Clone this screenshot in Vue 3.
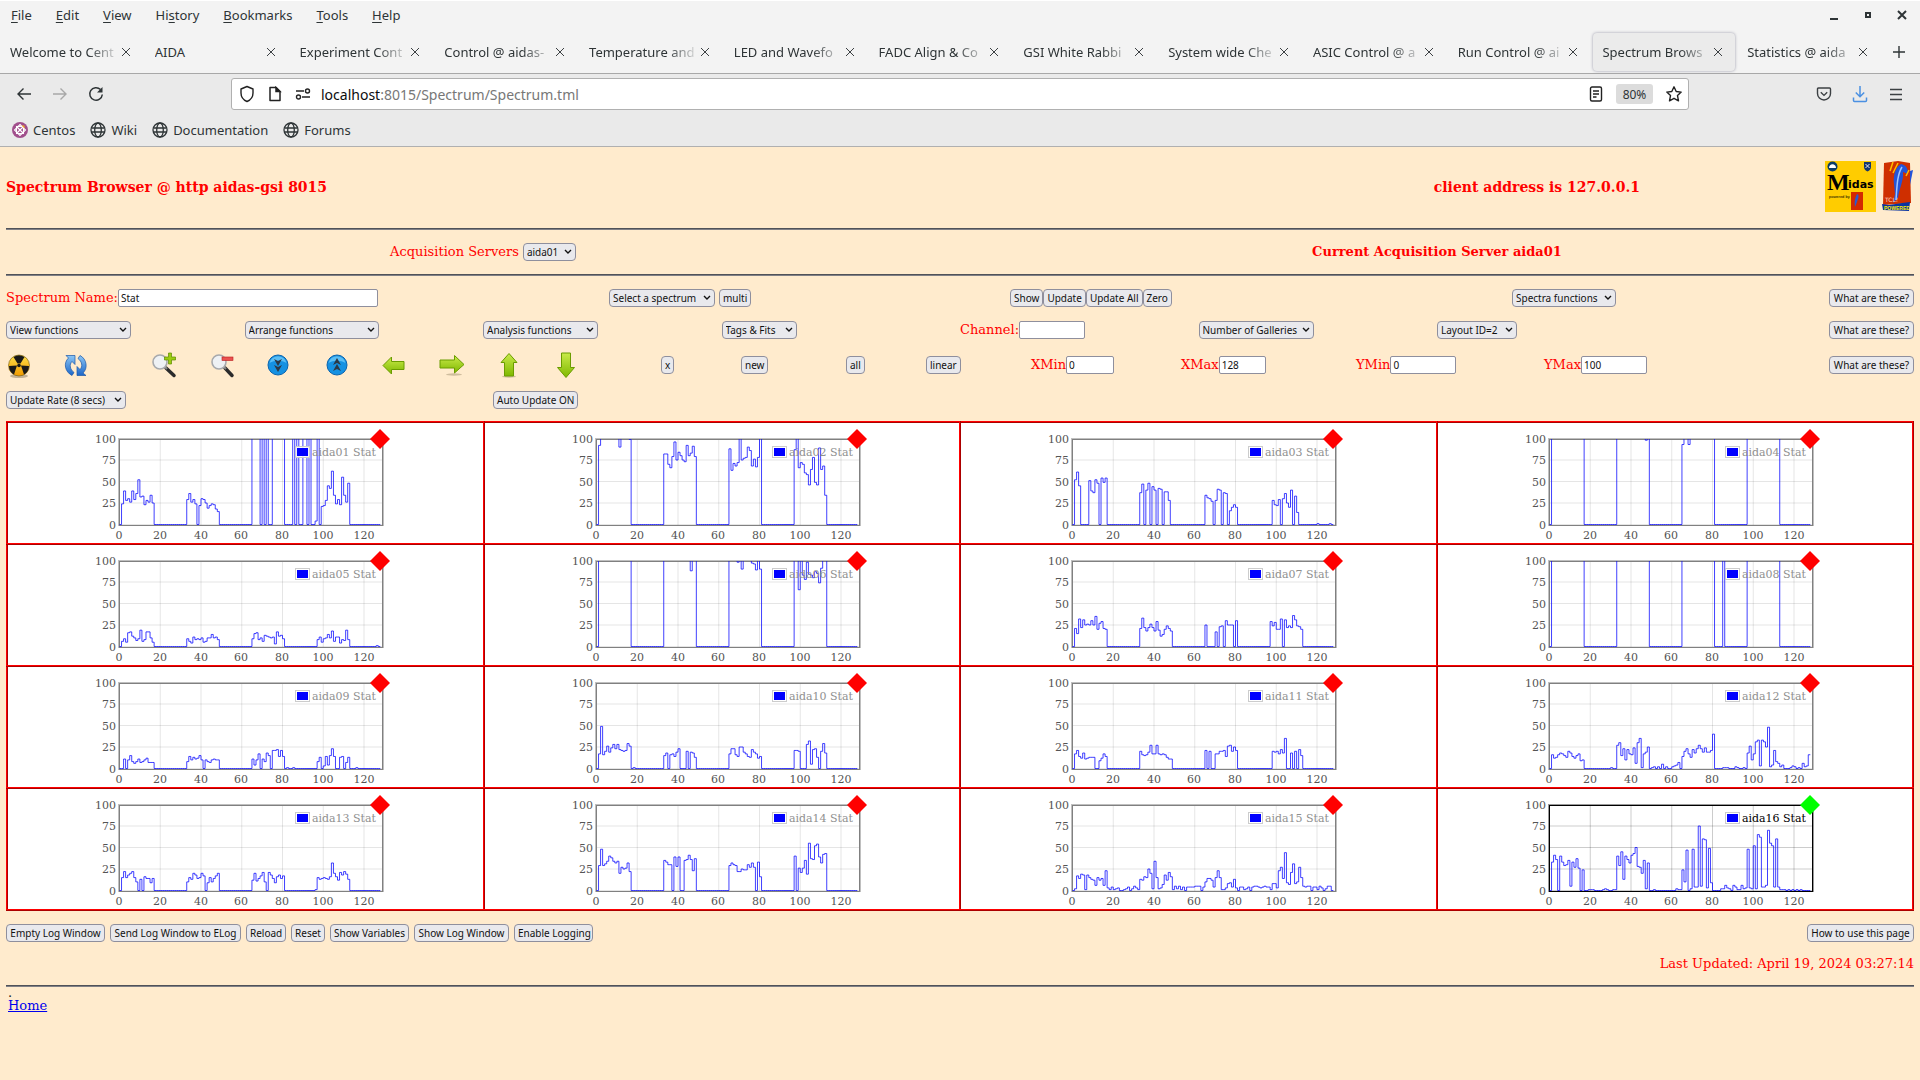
<script setup>
const menus = [
  ['', 'F', 'ile'], ['', 'E', 'dit'], ['', 'V', 'iew'], ['Hi', 's', 'tory'],
  ['', 'B', 'ookmarks'], ['', 'T', 'ools'], ['', 'H', 'elp'],
]
const tabs = [
  'Welcome to Cent', 'AIDA', 'Experiment Cont', 'Control @ aidas-', 'Temperature and',
  'LED and Wavefo', 'FADC Align & Co', 'GSI White Rabbi', 'System wide Che',
  'ASIC Control @ a', 'Run Control @ ai', 'Spectrum Brows', 'Statistics @ aida',
]
const activeTab = 11
const bookmarks = ['Centos', 'Wiki', 'Documentation', 'Forums']

const functionMenus = [
  { label: 'View functions', width: 125 },
  { label: 'Arrange functions', width: 134 },
  { label: 'Analysis functions', width: 115 },
  { label: 'Tags & Fits', width: 75 },
]
const galleryMenus = [
  { label: 'Number of Galleries', width: 115 },
  { label: 'Layout ID=2', width: 80 },
]
const limits = [
  { label: 'XMin', value: '0', width: 48 },
  { label: 'XMax', value: '128', width: 47 },
  { label: 'YMin', value: '0', width: 66 },
  { label: 'YMax', value: '100', width: 66 },
]
const logButtons = [
  { label: 'Empty Log Window', width: 99 },
  { label: 'Send Log Window to ELog', width: 131 },
  { label: 'Reload', width: 40 },
  { label: 'Reset', width: 34 },
  { label: 'Show Variables', width: 79 },
  { label: 'Show Log Window', width: 95 },
  { label: 'Enable Logging', width: 79 },
]

// Anything above the visible range is clipped by the plot area.
const H = 140
const full = Array(16).fill(H)
// Each spectrum maps a first channel to the run of counts that starts there.
const spectra = [
  { 1: [24, 39, 28, 30, 26, 39, 29, 36, 52, 32, 33, 23, 28, 26, 34, 25],
    33: [29, 36, 26, 29, 24, 0, 22, 30, 29, 25, 19, 22, 24, 23, 18, 15],
    65: [H, H, H, H, 0, H, 0, H, 0, 0, H, H, H, H, H, H],
    85: [H, 0, H, 0, 0, H, H, 0, H, 0, 0, 4, H, 0, 21, 22, 28, 45, 42, 62, 34, 24, 29, 23, 55, 34, 26, 48] },
  { 1: [92, H, H, H, H, H, H, H, H, H, 90, H, H, H, H, 99],
    33: [82, 82, 70, 66, 79, 96, 75, 84, 80, 75, 73, 92, 80, 83, 91, 79],
    65: [88, 63, 71, 68, 72, H, 75, 77, 78, 90, 86, 68, 76, 67, 78, H],
    97: [87, H, 66, 72, 70, 60, 58, 46, 64, 78, 49, 46, 89, 64, 68, 34] },
  { 1: [52, 61, 45, 0, 0, 0, 0, 51, 39, 37, 52, 48, 0, 54, 49, 54],
    33: [37, 47, 0, 40, 48, 0, 44, 40, 0, 42, 41, 0, 38, 38, 28],
    65: [34, 31, 30, 27, 0, 28, 41, 40, 0, 37, 36, 0, 16, 20, 23, 20],
    98: [28, 23, 22, 29, 0, 30, 36, 25, 20, 40, 0, 33, 14], 120: [1], 126: [1] },
  { 1: full, 33: [H, H, H, H, H, H, H, H, H, H, H, H, H, H, 98, H],
    65: [93, H, H, 93, H, H, H, H, H, H, H, H, H, H, H, H], 97: full },
  { 1: [6, 9, 5, 16, 17, 12, 10, 7, 9, 19, 6, 8, 17, 17, 10, 5],
    33: [9, 6, 4, 11, 8, 9, 8, 10, 5, 6, 10, 10, 14, 10, 11, 8],
    65: [9, 15, 16, 8, 10, 6, 13, 12, 11, 10, 11, 3, 17, 12, 13, 9],
    97: [8, 11, 5, 9, 10, 14, 10, 18, 6, 11, 11, 4, 8, 7, 19, 8], 126: [1] },
  { 1: full, 33: [H, H, H, H, H, H, H, H, H, H, H, H, H, 88, H, H],
    65: [H, H, H, H, 98, H, 90, H, H, H, H, 97, 96, 89, H, 90],
    97: [H, H, 66, H, 83, 78, 98, 84, 83, 80, 87, 85, 74, 91, H, H] },
  { 1: [21, 15, 32, 22, 31, 25, 26, 25, 30, 25, 35, 20, 27, 29, 21, 20],
    33: [21, 33, 22, 18, 22, 26, 22, 18, 29, 19, 12, 14, 20, 24, 21, 18],
    65: [25, 0, 0, 0, 0, 17, 0, 23, 24, 0, 30, 25, 25, 25, 0, 30],
    97: [29, 24, 28, 20, 20, 32, 0, 31, 22, 24, 22, 36, 31, 24, 23, 20] },
  { 1: full, 33: full, 65: full, 85: [H], 97: full },
  { 2: [11, 0, 10, 15, 8, 6, 8, 11, 7, 8, 10, 12, 7, 7, 7],
    33: [8, 14, 10, 13, 11, 12, 15, 10, 0, 10, 8, 7, 10, 11, 10, 10],
    65: [11, 4, 10, 17, 0, 11, 8, 18, 15, 0, 21, 21, 22, 14, 21, 14], 82: [1], 85: [1],
    97: [8, 13, 0, 3, 14, 4, 15, 23, 14, 0, 0, 13, 14, 0, 7, 13], 116: [1] },
  { 1: [17, 49, 16, 20, 26, 19, 24, 28, 23, 28, 22, 21, 20, 21, 29, 26], 18: [1],
    33: [15, 18, 0, 16, 17, 14, 19, 23, 0, 0, 0, 20, 0, 19, 18, 13],
    65: [17, 23, 23, 16, 14, 25, 25, 19, 17, 14, 13, 22, 19, 17, 12, 14],
    97: [21, 21, 20, 0, 0, 0, 28, 32, 5, 22, 23, 13, 0, 20, 29, 18] },
  { 1: [17, 21, 14, 12, 18, 11, 12, 13, 13, 13, 0, 0, 9, 12, 17, 14],
    33: [20, 16, 15, 16, 19, 27, 17, 17, 27, 17, 16, 17, 16, 13, 11, 11],
    65: [21, 0, 20, 0, 0, 17, 17, 20, 20, 21, 14, 26, 27, 20, 25, 21],
    98: [20, 19, 20, 17, 22, 18, 35, 0, 0, 18, 0, 20, 0, 22, 15] },
  { 1: [16, 12, 13, 16, 18, 17, 15, 13, 20, 18, 14, 12, 15, 17, 9, 10], 30: [1],
    33: [27, 30, 15, 23, 10, 22, 17, 16, 24, 6, 30, 35, 1, 17, 19, 25],
    50: [1, 2, 0, 2, 0, 5, 0, 2, 0, 0, 2, 3, 4, 7, 0, 14, 20, 23, 17, 13, 22, 18, 23, 27, 23, 19, 24, 19, 19, 21, 40],
    85: [1, 1, 1, 0, 0, 0, 2, 1, 0, 0, 1, 0, 18, 26, 10, 17, 31, 33, 3, 33, 31, 25, 48, 2, 4, 21, 8, 6, 2, 4, 0, 0, 0, 1, 3, 2, 0, 1, 0, 6, 2, 3, 16] },
  { 1: [15, 22, 15, 18, 20, 22, 15, 10, 0, 13, 0, 16, 14, 14, 9, 14],
    33: [10, 15, 13, 20, 18, 14, 15, 20, 17, 0, 9, 15, 10, 14, 17, 20],
    65: [12, 20, 11, 14, 17, 21, 10, 0, 21, 18, 14, 9, 16, 18, 14, 17],
    96: [1, 15, 13, 14, 15, 14, 13, 16, 32, 20, 16, 12, 21, 18, 22, 19, 13] },
  { 1: [29, 48, 29, 31, 34, 40, 38, 34, 32, 34, 20, 27, 25, 26, 32, 22],
    33: [35, 33, 30, 30, 0, 39, 28, 39, 0, 0, 35, 36, 41, 36, 23, 37],
    65: [29, 32, 30, 29, 22, 22, 25, 24, 24, 30, 27, 32, 27, 0, 33, 16],
    97: [40, 0, 26, 21, 26, 35, 19, 55, 37, 36, 52, 54, 39, 32, 42, 43] },
  { 1: [2, 17, 14, 19, 18, 1, 18, 15, 13, 12, 6, 15, 12, 14, 6, 23, 3, 1, 4, 1, 2, 3, 0, 0, 1, 2, 4, 0, 2, 5, 3, 1,
      13, 12, 16, 15, 25, 20, 2, 34, 15, 2, 3, 7, 18, 12, 21, 16, 1, 5, 2, 5, 1, 4, 0, 4, 4, 4, 4, 5, 5, 5, 0, 4,
      10, 14, 14, 12, 4, 15, 23, 15, 1, 1, 3, 8, 9, 4, 13, 3, 0, 4, 4, 1, 2, 4, 0, 4, 5, 5, 4, 3, 4, 5, 4, 4,
      1, 8, 8, 3, 23, 27, 14, 44, 9, 7, 21, 31, 8, 10, 27, 15, 5, 4, 5, 5, 0, 4, 4, 1, 5, 3, 0, 2, 5, 5, 0] },
  { 1: [33, 41, 36, 0, 40, 33, 29, 30, 35, 5, 33, 27, 37, 26, 0, 24, 0, 0, 1, 1, 1, 0, 0, 0, 0, 1, 2, 1, 0, 0, 1, 1,
      40, 29, 45, 13, 40, 36, 32, 41, 43, 50, 28, 27, 20, 35, 2, 32, 0, 0, 1],
    62: [2, 1, 1, 24, 10, 47, 0, 2, 48, 4, 4, 75, 5, 60, 59, 3, 49, 9, 0, 0, 0, 0, 2, 2, 6, 3, 2, 0, 6, 4, 1, 1, 6, 2, 3,
      48, 3, 2, 52, 2, 65, 62, 4, 4, 6, 70, 55, 52, 4, 60, 4, 1, 1, 1, 0, 1, 0, 1, 0, 1, 0, 1] },
]

const px = (channel) => 29.5 + channel * 2.0375
const py = (count) => 101.5 - Math.min(count, 110) * 0.86

function tracePath(runs) {
  const counts = Array(128).fill(0)
  for (const [start, values] of Object.entries(runs)) {
    values.forEach((v, i) => { counts[Number(start) + i] = v })
  }
  let d = `M${px(0)} ${py(counts[0])}`
  counts.slice(0, 128).forEach((v, i) => {
    d += `V${py(v).toFixed(2)}H${px(i + 1).toFixed(2)}`
  })
  return d
}

const charts = spectra.map((runs, i) => ({
  name: `aida${String(i + 1).padStart(2, '0')} Stat`,
  path: tracePath(runs),
  selected: i === 15,
}))
const chartRows = [0, 4, 8, 12].map((n) => charts.slice(n, n + 4))
const xTicks = [0, 20, 40, 60, 80, 100, 120]
const yTicks = [0, 25, 50, 75, 100]
</script>

<template>
  <div class="window">
    <header class="chrome">
      <div class="menubar">
        <nav class="menus">
          <a v-for="m in menus" :key="m.join('')" href="#">{{ m[0] }}<u>{{ m[1] }}</u>{{ m[2] }}</a>
        </nav>
        <div class="winctl">
          <button aria-label="Minimise"><svg width="10" height="12" viewBox="0 0 10 12"><path d="M1 10h8" stroke="#2e3436" stroke-width="2" /></svg></button>
          <button aria-label="Restore"><svg width="10" height="12" viewBox="0 0 10 12"><path d="M3 4h4v4H3z" fill="none" stroke="#2e3436" stroke-width="2" /></svg></button>
          <button aria-label="Close"><svg width="10" height="12" viewBox="0 0 10 12"><path d="M1 2l8 8M9 2l-8 8" stroke="#2e3436" stroke-width="2" /></svg></button>
        </div>
      </div>
      <div class="tabs">
        <div v-for="(t, i) in tabs" :key="t" class="tab" :class="{ active: i === activeTab }">
          <span class="tabname">{{ t }}</span>
          <button :aria-label="'Close ' + t"><svg width="10" height="10" viewBox="0 0 10 10"><path d="M1 1l8 8M9 1l-8 8" stroke="#3c4043" fill="none" /></svg></button>
        </div>
        <button class="newtab" aria-label="New tab"><svg width="14" height="14" viewBox="0 0 14 14"><path d="M7 1v12M1 7h12" stroke="#2e3436" stroke-width="1.4" /></svg></button>
      </div>
      <div class="toolbar">
        <div class="navbtns">
          <button aria-label="Back"><svg width="16" height="16" viewBox="0 0 16 16" fill="none" stroke="#2e3436" stroke-width="1.4"><path d="M15 8H2M7.5 2.5L2 8l5.5 5.5" /></svg></button>
          <button aria-label="Forward"><svg width="16" height="16" viewBox="0 0 16 16" fill="none" stroke="#a8a8a8" stroke-width="1.4"><path d="M1 8h13M8.5 2.5L14 8l-5.5 5.5" /></svg></button>
          <button aria-label="Reload"><svg width="16" height="16" viewBox="0 0 16 16" fill="none" stroke="#2e3436" stroke-width="1.5"><path d="M12.5 3.500A6.300 6.300 0 1 0 14.300 8.500" /><path d="M14.500 1v5.500H9z" fill="#2e3436" stroke="none" /></svg></button>
        </div>
        <div class="urlbar">
          <svg width="16" height="18" viewBox="0 0 16 18" fill="none" stroke="#222" stroke-width="1.4"><path d="M8 1.500l6 2.500v4c0 4-2.500 7-6 8.500C4.500 15 2 12 2 8V4z" stroke-linejoin="round" /></svg>
          <svg width="16" height="16" viewBox="0 0 16 16" fill="none" stroke="#222" stroke-width="1.5"><path d="M3 1.500h6L13 5.500v9H3z" stroke-linejoin="round" /><path d="M9 1.500v4h4z" fill="#222" /></svg>
          <svg width="16" height="14" viewBox="0 0 16 14" fill="none" stroke="#222" stroke-width="1.4"><path d="M1 4h8M7 10h8" /><circle cx="12.500" cy="4" r="2" /><circle cx="3.500" cy="10" r="2" /></svg>
          <a class="address" href="#"><b>localhost</b>:8015/Spectrum/Spectrum.tml</a>
          <svg width="16" height="16" viewBox="0 0 16 16" fill="none" stroke="#222" stroke-width="1.4"><rect x="2.500" y="1" width="11" height="14" rx="1.500" /><path d="M5 5h6M5 8h6M5 11h3.500" /></svg>
          <button class="zoom">80%</button>
          <svg width="18" height="18" viewBox="0 0 18 18" fill="none" stroke="#222" stroke-width="1.4"><path d="M9 1.800l2.200 4.700 5 .600-3.700 3.500 1 5.200L9 13.300l-4.500 2.500 1-5.200L1.800 7.100l5-.6z" stroke-linejoin="round" /></svg>
        </div>
        <div class="tools">
          <button aria-label="Pocket"><svg width="16" height="16" viewBox="0 0 16 16" fill="none" stroke="#3c4043" stroke-width="1.4"><path d="M2.500 2h11c.8 0 1 .4 1 1v4.500a6.500 6.500 0 0 1-13 0V3c0-.6.2-1 1-1z" /><path d="M4.800 6.300L8 9.400l3.200-3.100" /></svg></button>
          <button aria-label="Downloads"><svg width="16" height="18" viewBox="0 0 16 18" fill="none" stroke="#4a90e2" stroke-width="1.5"><path d="M8 1v10.500M3.800 7.500L8 11.700l4.200-4.200M1.500 12.500v3c0 .7.300 1 1 1h11c.7 0 1-.3 1-1v-3" /></svg></button>
          <button aria-label="Application menu"><svg width="16" height="16" viewBox="0 0 16 16"><path d="M2 3.500h12M2 8.500h12M2 13.500h12" stroke="#3c4043" stroke-width="1.4" /></svg></button>
        </div>
      </div>
      <nav class="bookmarks">
        <a v-for="(b, i) in bookmarks" :key="b" href="#">
          <svg v-if="i === 0" width="16" height="16" viewBox="0 0 16 16"><circle cx="8" cy="8" r="8" fill="#a14f8c" /><g fill="none" stroke="#fff" stroke-width="1.1"><rect x="4.500" y="4.500" width="7" height="7" /><path d="M8 2.500L13.500 8 8 13.500 2.500 8zM4.500 4.500l7 7M11.500 4.500l-7 7" /></g><path d="M9.500 3.500h3v3z" fill="#efa724" /></svg>
          <svg v-else width="16" height="16" viewBox="0 0 16 16" fill="none" stroke="#2e3436" stroke-width="1.3"><circle cx="8" cy="8" r="7" /><ellipse cx="8" cy="8" rx="3.300" ry="7" /><path d="M1.500 6h13M1.500 10h13" /></svg>
          {{ b }}
        </a>
      </nav>
    </header>

    <main class="page">
      <div class="masthead">
        <h3>Spectrum Browser @ http aidas-gsi 8015</h3>
        <h3>client address is 127.0.0.1</h3>
        <div class="logos">
          <svg width="51" height="51" viewBox="0 0 51 51">
            <rect width="51" height="51" fill="#fc0" />
            <circle cx="7.500" cy="5.500" r="5" fill="#0b3d66" /><path d="M4 7c0-5 7-5 7 0z" fill="#fff" />
            <path d="M39 1h7v5c0 2-1.500 3.500-3.500 4.500C40.500 9.500 39 8 39 6z" fill="#15356e" /><path d="M40.500 3l4 4M44.500 3l-4 4" stroke="#e8e8f0" />
            <text x="2" y="29" font-family="Liberation Serif, serif" font-size="24" font-weight="bold">M</text>
            <text x="23" y="27" font-family="DejaVu Sans, sans-serif" font-size="11" font-weight="bold">idas</text>
            <text x="4" y="37" font-family="Liberation Sans, sans-serif" font-size="4">powered by</text>
            <rect x="26" y="31" width="12" height="18" fill="#d42a00" /><path d="M32 33c3 1 1 5 0 8l-2 5c-1-5 0-9 2-13z" fill="#2a5ad0" />
          </svg>
          <svg width="33" height="51" viewBox="0 0 33 51">
            <path d="M3 2l14-2 12 2 1 40-28 2z" fill="#cf2f00" />
            <path d="M1 43l7 1 13-2 8-1-1 9-26-1z" fill="#0a34a0" />
            <path d="M20 3c-6 3-8 12-7 20l1 10-2 9 5-5c1-9 6-18 5-26l5 2c0-6-2-9-7-10z" fill="#2454d8" />
            <path d="M21 6c-5 8-5 20-6 33" fill="none" stroke="#9ec4ff" stroke-width="1.5" />
            <path d="M29 10l3-1-3 15" fill="#2454d8" /><path d="M12 1L9 10M17 2l-5 10M28 9l-3 6" stroke="#fb0" stroke-width="1.5" />
            <text x="4" y="41" font-family="DejaVu Sans, sans-serif" font-size="6" fill="#ffd9c8">TCL!</text>
            <text x="3" y="49" font-family="Liberation Sans, sans-serif" font-size="5" font-weight="bold" fill="#fe0">POWERED</text>
          </svg>
        </div>
      </div>
      <hr>
      <div class="servers">
        <div>
          <label for="server">Acquisition Servers</label>
          <span class="pick"><select id="server" class="w53"><option>aida01</option></select><svg viewBox="0 0 8 6"><path d="M1 1l3 3 3-3" /></svg></span>
        </div>
        <b>Current Acquisition Server aida01</b>
      </div>
      <hr>

      <div class="row names">
        <div><label for="spec">Spectrum Name:</label><input id="spec" class="w260" value="Stat"></div>
        <div class="spaced">
          <span class="pick"><select class="w106" aria-label="Select a spectrum"><option>Select a spectrum</option></select><svg viewBox="0 0 8 6"><path d="M1 1l3 3 3-3" /></svg></span>
          <button>multi</button>
        </div>
        <div><button>Show</button><button>Update</button><button>Update All</button><button>Zero</button></div>
        <div><span class="pick"><select class="w104" aria-label="Spectra functions"><option>Spectra functions</option></select><svg viewBox="0 0 8 6"><path d="M1 1l3 3 3-3" /></svg></span></div>
        <div class="end"><button>What are these?</button></div>
      </div>

      <div class="row functions">
        <div v-for="f in functionMenus" :key="f.label">
          <span class="pick"><select :style="{ width: f.width + 'px' }" :aria-label="f.label"><option>{{ f.label }}</option></select><svg viewBox="0 0 8 6"><path d="M1 1l3 3 3-3" /></svg></span>
        </div>
        <div><label for="channel">Channel:</label><input id="channel" class="w66"></div>
        <div v-for="f in galleryMenus" :key="f.label">
          <span class="pick"><select :style="{ width: f.width + 'px' }" :aria-label="f.label"><option>{{ f.label }}</option></select><svg viewBox="0 0 8 6"><path d="M1 1l3 3 3-3" /></svg></span>
        </div>
        <div class="end"><button>What are these?</button></div>
      </div>

      <div class="row actions">
        <svg width="26" height="26" viewBox="0 0 26 26">
          <defs>
            <linearGradient id="gold" x2="0" y2="1"><stop stop-color="#ffe04a" /><stop offset="1" stop-color="#f09a00" /></linearGradient>
            <linearGradient id="sky" x2="0" y2="1"><stop stop-color="#8cc6f5" /><stop offset="1" stop-color="#1c66c8" /></linearGradient>
            <linearGradient id="leaf" x2="0" y2="1"><stop stop-color="#c9ea4a" /><stop offset="1" stop-color="#7fb800" /></linearGradient>
          </defs>
          <ellipse cx="13" cy="24" rx="9" ry="2" fill="#8a7a60" opacity=".5" />
          <circle cx="13" cy="13.500" r="10.500" fill="url(#gold)" stroke="#6b5200" stroke-width=".6" />
          <path d="M11.500 11.500L7.500 5A10 10 0 0 1 18.500 5L14.500 11.500zM11 13.500L3 14A10 10 0 0 0 8 22.500zM15 13.500l8 .5A10 10 0 0 1 18 22.500z" fill="#191919" />
          <circle cx="13" cy="13.500" r="1.800" fill="#191919" />
        </svg>
        <svg width="26" height="26" viewBox="0 0 26 26" fill="url(#sky)" stroke="#1a56a8" stroke-width=".7">
          <path d="M3 3.500h9v9l-3-3c-3 3-2 8 2 11l-2 3C2 20 0 11 5.500 6z" /><path d="M23 23.500h-9v-9l3 3c3-3 2-8-2-11l2-3c7 3.500 8 13 3 17.500z" />
        </svg>
        <svg width="26" height="26" viewBox="0 0 26 26">
          <path d="M15 16l8 7.500" stroke="#2b2b2b" stroke-width="3.5" stroke-linecap="round" /><path d="M13 14l3 3" stroke="#888" stroke-width="2" />
          <circle cx="9" cy="10" r="7" fill="#eef1f4" stroke="#a7a9ac" stroke-width="1.6" />
          <path d="M17.500 1h3v4h4v3h-4v4h-3V8h-4V5h4z" fill="#9ccc12" stroke="#5c8a00" stroke-width=".7" />
        </svg>
        <svg width="26" height="26" viewBox="0 0 26 26">
          <path d="M15 16l7 7.500" stroke="#2b2b2b" stroke-width="3.5" stroke-linecap="round" /><path d="M13 14l3 3" stroke="#888" stroke-width="2" />
          <circle cx="9" cy="10" r="7" fill="#eef1f4" stroke="#a7a9ac" stroke-width="1.6" />
          <rect x="12" y="5" width="11" height="3.500" fill="#ea5050" stroke="#b81c1c" stroke-width=".6" />
        </svg>
        <svg width="22" height="26" viewBox="0 0 22 26">
          <circle cx="11" cy="13" r="10" fill="#1591e2" stroke="#0b64ae" /><path d="M2.500 11a8.700 8.700 0 0 1 17 0c-5-3-12-3-17 0z" fill="#59bdf5" />
          <path d="M7 7l4 2 4-2-4 7zM7 13l4 2 4-2-4 7z" fill="#2c3845" />
        </svg>
        <svg width="22" height="26" viewBox="0 0 22 26">
          <circle cx="11" cy="13" r="10" fill="#1591e2" stroke="#0b64ae" /><path d="M2.500 11a8.700 8.700 0 0 1 17 0c-5-3-12-3-17 0z" fill="#59bdf5" />
          <path d="M7 13l4-2 4 2-4-7zM7 19l4-2 4 2-4-7z" fill="#2c3845" />
        </svg>
        <svg width="24" height="26" viewBox="0 0 24 26"><path d="M1 13.500L9.500 5v4.500H22v8H9.500V22z" fill="url(#leaf)" stroke="#6a9c00" /></svg>
        <svg width="26" height="26" viewBox="0 0 26 26"><ellipse cx="15" cy="22.500" rx="8" ry="1.200" fill="#a09070" opacity=".5" /><path d="M25 12.500L15.500 3.500v4.500H1v8h14.500v5z" fill="url(#leaf)" stroke="#6a9c00" /></svg>
        <svg width="20" height="26" viewBox="0 0 20 26"><ellipse cx="10" cy="24.500" rx="7" ry="1.200" fill="#a09070" opacity=".5" /><path d="M10 1.500L18 10.500h-3.500V24h-9V10.500H2z" fill="url(#leaf)" stroke="#6a9c00" /></svg>
        <svg width="20" height="30" viewBox="0 0 20 30"><path d="M10 27.500L1.500 17.500h4V3h9v14.500h4z" fill="url(#leaf)" stroke="#6a9c00" /></svg>
        <div><button>x</button></div>
        <div><button>new</button></div>
        <div><button>all</button></div>
        <div><button>linear</button></div>
        <div v-for="l in limits" :key="l.label"><label :for="l.label">{{ l.label }}</label><input :id="l.label" :value="l.value" :style="{ width: l.width + 'px' }"></div>
        <div class="end"><button>What are these?</button></div>
      </div>

      <div class="row updates">
        <div><span class="pick"><select class="w120" aria-label="Update rate"><option>Update Rate (8 secs)</option></select><svg viewBox="0 0 8 6"><path d="M1 1l3 3 3-3" /></svg></span></div>
        <div><button>Auto Update ON</button></div>
      </div>

      <table class="gallery">
        <tbody>
          <tr v-for="(row, r) in chartRows" :key="r">
            <td v-for="c in row" :key="c.name">
              <svg class="chart" :class="{ selected: c.selected }" width="310" height="120" viewBox="0 0 310 120" role="img" :aria-label="c.name">
                <defs><clipPath :id="'clip-' + c.name.slice(0, 6)"><rect x="29" y="16" width="264" height="87" /></clipPath></defs>
                <g class="grid">
                  <path v-for="x in xTicks" :key="x" :d="`M${px(x)} 16V102`" />
                  <path v-for="y in yTicks" :key="y" :d="`M29 ${py(y)}H293`" />
                </g>
                <rect class="halo" x="28.500" y="15.500" width="265" height="87" />
                <rect class="frame" x="29.500" y="16.500" width="263" height="86" />
                <path class="trace" :d="c.path" :clip-path="`url(#clip-${c.name.slice(0, 6)})`" />
                <g class="ticks">
                  <text v-for="x in xTicks" :key="x" :x="Math.floor(px(x))" y="116" text-anchor="middle">{{ x }}</text>
                  <text v-for="y in yTicks" :key="y" x="26" :y="Math.round(py(y)) + 4" text-anchor="end">{{ y }}</text>
                </g>
                <rect x="205.500" y="23.500" width="14" height="11" fill="#fff" fill-opacity=".85" stroke="#ccc" />
                <rect x="207" y="25" width="11" height="8" fill="#00f" />
                <text class="name" x="286" y="33" text-anchor="end">{{ c.name }}</text>
                <path class="marker" d="M290 6l10 10-10 10-10-10z" />
              </svg>
            </td>
          </tr>
        </tbody>
      </table>

      <div class="logs">
        <div class="logbtns"><button v-for="b in logButtons" :key="b.label" :style="{ width: b.width + 'px' }">{{ b.label }}</button></div>
        <button class="w107">How to use this page</button>
      </div>
      <p class="updated">Last Updated: April 19, 2024 03:27:14</p>
      <hr>
      <div class="foot"><span>.</span><a href="#">Home</a></div>
    </main>
  </div>
</template>

<style>
body { margin: 0; background: #ffebcd; }
</style>

<style scoped>
* { box-sizing: border-box; }
.window { min-width: 1200px; }
svg { display: block; flex: none; }

.chrome { font-family: "Noto Sans", sans-serif; font-size: 13px; color: #2e3436; background: #f3f3f3; border-top: 1px solid #fff; }
.chrome a { color: inherit; text-decoration: none; }
.chrome button { border: 0; padding: 0; margin: 0; background: none; font: inherit; color: inherit; display: flex; align-items: center; justify-content: center; }
.menubar { display: flex; justify-content: space-between; height: 30px; align-items: center; padding: 0 13px 2px 11px; }
.menus { display: flex; gap: 24px; }
.menus u { text-underline-offset: 2px; }
.winctl { display: flex; gap: 24px; }
.tabs { display: flex; height: 43px; align-items: center; border-bottom: 1px solid #a8a8a8; padding: 0 4px 1px 0; }
.tab { flex: 1 1 0; min-width: 0; display: flex; align-items: center; height: 38px; padding: 0 12px 0 9px; margin: 0 2px 0 1px; border-radius: 4px; }
.tab.active { background: #ebebeb; box-shadow: 0 0 3px #99a; }
.tabname { flex: 1; min-width: 0; overflow: hidden; white-space: nowrap; mask-image: linear-gradient(to right, #000 70%, transparent); }
.tab:nth-child(2) .tabname { mask-image: none; }
.newtab { width: 34px; height: 32px; flex: none; }

.toolbar { display: flex; align-items: center; height: 40px; background: #eaeaea; padding: 0 16px; }
.navbtns { display: flex; gap: 20px; width: 215px; }
.tools { display: flex; justify-content: flex-end; gap: 20px; width: 215px; }
.urlbar { flex: 1; display: flex; align-items: center; height: 32px; background: #fff; border: 1px solid #b0b0b0; border-radius: 3px; padding: 0 5px 0 7px; gap: 12px; }
.address { flex: 1; font-size: 14px; color: #777 !important; margin-left: -2px; }
.address b { font-weight: 400; color: #0c0c0d; }
.urlbar .zoom { background: #dcdcdc; border-radius: 3px; width: 37px; height: 20px; font-size: 12px; }
.bookmarks { display: flex; gap: 15px; height: 33px; align-items: center; padding: 0 12px; background: #eaeaea; border-bottom: 1px solid #b0b0b0; }
.bookmarks a { display: flex; align-items: center; gap: 5px; }

.page { font-family: "DejaVu Serif", serif; font-size: 13px; line-height: 16px; color: #f00; padding: 0 6px; }
h3 { margin: 0; font-size: 14px; }
hr { margin: 0; border: 0; height: 2px; background: #808086; border-top: 1px solid #505258; }
.masthead { display: grid; grid-template-columns: 1427fr 391fr auto; align-items: center; height: 81px; padding-bottom: 2px; }
.logos { display: flex; gap: 5px; }
.servers { display: grid; grid-template-columns: 1fr 1fr; justify-items: center; align-items: center; height: 44px; }
.servers > div { display: flex; align-items: center; gap: 4px; }

.page button, .page select, .page input { font-family: "Noto Sans", sans-serif; font-size: 10px; line-height: 16px; height: 18px; margin: 0; color: #111; border: 1px solid #8f8f9d; }
.page button { background: #e9e9ed; border-radius: 4px; padding: 0 3px; white-space: nowrap; }
.page select { appearance: none; background: #e9e9ed; border-radius: 4px; padding: 0 3px; display: block; }
.page input { background: #fff; border-radius: 2px; padding: 0 2px; }
.pick { position: relative; display: inline-block; }
.pick svg { position: absolute; right: 4px; top: 6px; width: 8px; height: 6px; fill: none; stroke: #111; stroke-width: 1.4; pointer-events: none; }
.w53 { width: 53px; }
.w66 { width: 66px; }
.w104 { width: 104px; }
.w106 { width: 106px; }
.w107 { width: 107px; }
.w120 { width: 120px; }
.w260 { width: 260px; }

.row { display: grid; align-items: center; }
.row > div { display: flex; align-items: center; min-width: 0; white-space: nowrap; }
.row > .spaced { gap: 4px; }
.row > .end { justify-content: flex-end; }
.end button { width: 85px; }
.names { height: 43px; grid-template-columns: 603fr 401fr 502fr 302fr 100fr; }
.functions { height: 21px; grid-template-columns: repeat(8, 1fr); }
.actions { height: 50px; grid-template-columns: 57fr 88fr 59fr 57fr 59fr 56fr 57fr 60fr 57fr 105fr 80fr 105fr 80fr 105fr 150fr 175fr 188fr 285fr 85fr; }
.updates { height: 20px; grid-template-columns: 487fr 1421fr; }

.gallery { width: 100%; margin-top: 11px; table-layout: fixed; border-collapse: collapse; background: #fff; }
.gallery, .gallery td { border: 2px ridge #f00; }
.gallery td { padding: 0; height: 120px; width: calc(25% - 1px); }
.gallery td:last-child { width: auto; }
.chart { margin: 0 auto; overflow: visible; font-family: "DejaVu Serif", serif; font-size: 11px; }
.grid path { stroke: #000; stroke-opacity: .1; fill: none; }
.halo { fill: none; stroke: #bfbfbf; }
.frame { fill: none; stroke: #808080; }
.trace { fill: none; stroke: #00f; stroke-opacity: .75; }
.ticks { fill: #545454; }
.name { fill: #909090; }
.marker { fill: #f00; }
.selected .halo { stroke: #999; }
.selected .frame { stroke: #000; }
.selected .grid path { stroke-opacity: .2; }
.selected .name { fill: #000; }
.selected .marker { fill: #0f0; }

.logs { display: flex; justify-content: space-between; margin-top: 13px; }
.logbtns { display: flex; gap: 5px; }
.updated { margin: 14px 0 13px; text-align: right; }
.foot { padding: 2px; color: #222; display: flex; flex-direction: column; line-height: 8px; }
.foot a { color: #00e; line-height: 18px; align-self: flex-start; }
</style>
